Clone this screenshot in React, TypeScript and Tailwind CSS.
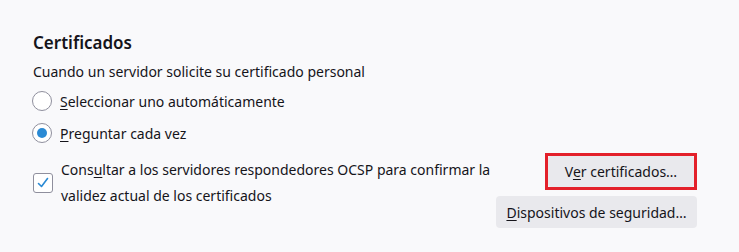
import React from "react";

function Radio({ checked }: { checked?: boolean }) {
  return (
    <span className="flex h-[20px] w-[20px] shrink-0 items-center justify-center rounded-full border border-[#8f8f9d] bg-white">
      {checked && <span className="h-[10px] w-[10px] rounded-full bg-[#2a8ad4]" />}
    </span>
  );
}

function Checkbox() {
  return (
    <span className="flex h-[20px] w-[20px] shrink-0 items-center justify-center rounded-[3px] border border-[#8f8f9d] bg-white">
      <svg width="14" height="14" viewBox="0 0 14 14" fill="none">
        <path d="M2.5 7.5 L5.5 10.5 L11.5 2.5" stroke="#2a8ad4" strokeWidth="1.6" strokeLinecap="round" strokeLinejoin="round" />
      </svg>
    </span>
  );
}

export default function App() {
  return (
    <div
      className="h-[252px] w-[739px] bg-[#f9f9fb] pl-[33px] pr-[42px] pt-[30px] text-[14px] text-[#15141a]"
      style={{ fontFamily: '"Noto Sans", "Segoe UI", sans-serif' }}
    >
      <h2 className="h-[26px] text-[17px] font-semibold leading-[26px]">Certificados</h2>
      <p className="mt-[3px] h-[26px] leading-[26px]">
        Cuando un servidor solicite su certificado personal
      </p>
      <label className="-ml-[1px] flex h-[32px] items-center gap-[8px]">
        <Radio />
        <span>
          <u className="underline-offset-2">S</u>eleccionar uno automáticamente
        </span>
      </label>
      <label className="-ml-[1px] flex h-[32px] items-center gap-[8px]">
        <Radio checked />
        <span>
          <u className="underline-offset-2">P</u>reguntar cada vez
        </span>
      </label>
      <div className="mt-[7px] flex justify-between">
        <label className="flex items-center gap-[8px] self-start">
          <Checkbox />
          <span className="whitespace-nowrap pt-[1px] leading-[26px]">
            Cons<u className="underline-offset-2">u</u>ltar a los servidores respondedores OCSP para confirmar la
            <br />
            validez actual de los certificados
          </span>
        </label>
        <div className="-mt-[3px] flex flex-col items-end gap-[6px]">
          <div className="border-[3px] border-[#e3202a]">
            <button className="block h-[31px] w-[146px] rounded-[3px] bg-[#e9e9ed]">
              V<u className="underline-offset-2">e</u>r certificados…
            </button>
          </div>
          <button className="h-[32px] w-[201px] rounded-[4px] bg-[#e9e9ed]">
            <u className="underline-offset-2">D</u>ispositivos de seguridad…
          </button>
        </div>
      </div>
    </div>
  );
}
